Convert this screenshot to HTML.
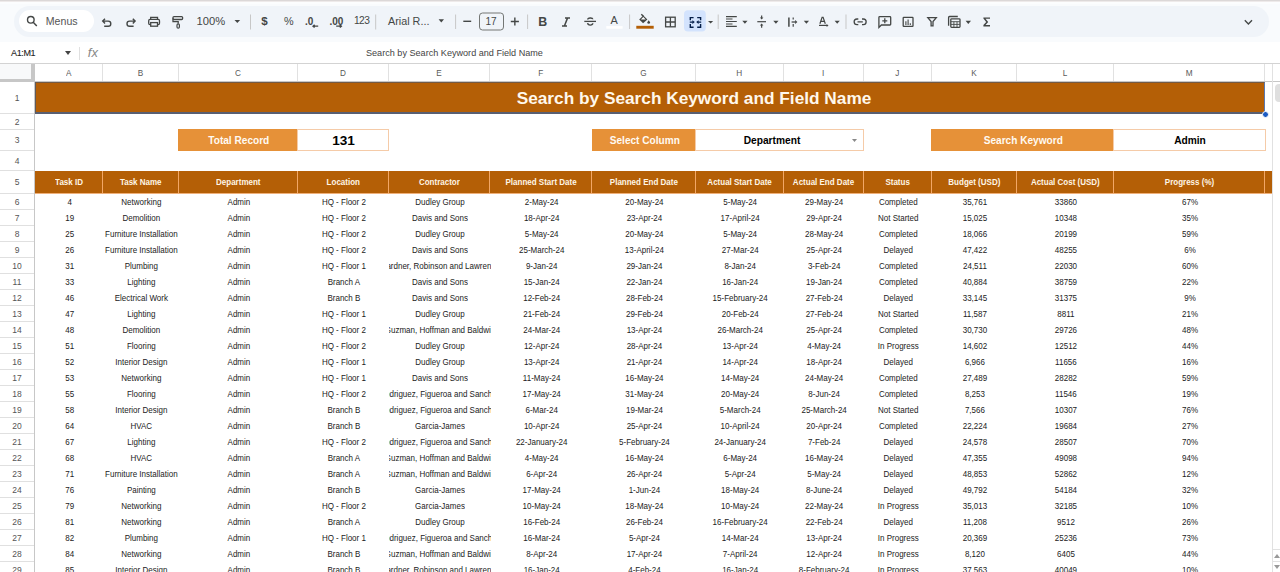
<!DOCTYPE html><html><head><meta charset="utf-8"><style>
*{margin:0;padding:0;box-sizing:border-box}
html,body{width:1280px;height:572px;overflow:hidden;background:#fff;font-family:"Liberation Sans",sans-serif;position:relative}
.a{position:absolute}
.c{position:absolute;overflow:hidden;white-space:nowrap;text-align:center;display:flex;justify-content:center}
.c span{display:inline-block}
.d{font-size:8px;color:#222;line-height:16px;padding-top:1.9px}
.d span,.h5 span{transform:scaleY(1.1)}
.ch{font-size:8.2px;color:#5a5a5a;line-height:18px;text-align:center}
.ch span{transform:scaleY(1.12)}
.rh{font-size:8.5px;color:#555;text-align:center;left:0;width:34px}
.hl{position:absolute;left:0;width:34px;height:1px;background:#e0e0e0}
.ico{position:absolute}
</style></head><body>

<div class="a" style="left:0;top:0;width:1280px;height:1px;background:#dcd8d8"></div><div class="a" style="left:0;top:1px;width:1280px;height:1px;background:#eeeaea"></div>
<div class="a" style="left:0;top:2px;width:1280px;height:40px;background:#f9fbfd"></div><div class="a" style="left:0;top:2px;width:1280px;height:2px;background:#fcfdfe"></div>
<div class="a" style="left:14px;top:6px;width:1255px;height:31px;background:#f0f4f9;border-radius:16px"></div>
<div class="a" style="left:19px;top:10px;width:75px;height:22px;background:#fff;border-radius:11px"></div>
<div class="a" style="left:45.8px;top:15px;font-size:10.6px;color:#555;line-height:12px">Menus</div>
<svg class="ico" style="left:0;top:0" width="1280" height="42" viewBox="0 0 1280 42">
<g fill="none" stroke="#444746" stroke-width="1.3" stroke-linecap="butt" stroke-linejoin="miter">
<!-- search -->
<circle cx="30.8" cy="19.8" r="3.3" stroke-width="1.4"/>
<path d="M33.2 22.3L36.8 26" stroke-width="1.5"/>
<!-- undo -->
<path d="M105 18.8L102.7 21.1L105 23.4M102.8 21.1H108.2A2.6 2.6 0 0 1 108.2 26.3H104.2" stroke-width="1.4"/>
<!-- redo -->
<path d="M132.8 18.8L135.1 21.1L132.8 23.4M135 21.1H129.6A2.6 2.6 0 0 0 129.6 26.3H133.6" stroke-width="1.4"/>
<!-- print -->
<path d="M150.7 19.3V17.4H157.5V19.3" stroke-width="1.3"/>
<rect x="148.7" y="19.4" width="10.8" height="5.2" rx="1.3" stroke-width="1.3"/>
<rect x="150.7" y="22.6" width="6.8" height="3.6" stroke-width="1.3" fill="#f0f4f9"/>
<!-- paint format -->
<rect x="173" y="16.6" width="9.6" height="2.9" rx="1" stroke-width="1.3"/>
<path d="M173 18.2V21.6H178.2V23.6" stroke-width="1.3"/>
<rect x="177" y="23.8" width="2.4" height="4.4" rx="1.2" stroke-width="1.2"/>
<!-- separators -->
<path d="M250.5 14.5V29.5M375.7 14.5V29.5M455.6 14.5V29M527.6 14.5V29M629.6 14.5V29M718.2 14.5V29M846 14.5V29" stroke="#c7c7c7" stroke-width="1"/>
<!-- minus plus -->
<path d="M463.3 21.3H471.2" stroke-width="1.4"/>
<path d="M510.8 21.5H518.9M514.85 17.5V25.6" stroke-width="1.4"/>
<!-- font size box -->
<rect x="479.5" y="13" width="24" height="17" rx="3" stroke="#747775" stroke-width="1"/>
<!-- italic -->
<path d="M565 17.9H570M562 26H567M567.6 17.9L564.4 26" stroke-width="1.5"/>
<!-- strikethrough -->
<path d="M584.3 21.4H596" stroke-width="1.3"/>
<path d="M587.7 19.6C587.7 17.6 592.6 17.3 592.8 19.3" stroke-width="1.4"/>
<path d="M587.6 23.2C587.9 25.7 592.7 25.7 592.8 23.3" stroke-width="1.4"/>
<!-- borders -->
<rect x="665.6" y="17.2" width="9.6" height="9.6" stroke-width="1.3"/>
<path d="M670.4 17.2V26.8M665.6 22H675.2" stroke-width="1.3"/>
<!-- align left -->
<path d="M726 16.6H736.8M726 19H732.5M726 21.5H736.8M726 24H732.5M726 26.4H736.8" stroke-width="1.15"/>
<!-- vertical align -->
<path d="M757.3 21.7H766" stroke-width="1.2"/>
<path d="M761.65 15.6V18.2M761.65 27.7V25" stroke-width="1.2"/>
<path d="M759.9 17.6H763.4L761.65 19.6Z M759.9 25.6H763.4L761.65 23.5Z" fill="#444746" stroke="none"/>
<!-- text wrap -->
<path d="M788.9 17.6V26.7" stroke-width="1.5"/>
<path d="M793.2 17.6V19.6M793.2 23.9V26.7" stroke-width="1.2"/>
<path d="M791.6 22H795.4" stroke-width="1.3"/>
<path d="M795.1 20.1L797.4 22L795.1 23.9Z" fill="#444746" stroke="none"/>
<!-- text rotate -->
<path d="M819.9 23.7L822.1 17.3H823.1L825.3 23.7M820.7 21.4H824.5" stroke-width="1.2"/>
<path d="M819 25.4H827" stroke-width="1.2"/>
<path d="M826.6 23.9L828.5 25.4L826.6 26.9Z" fill="#444746" stroke="none"/>
<!-- link -->
<path d="M858.3 19H857A2.85 2.85 0 0 0 857 24.7H858.3M862 19H863.3A2.85 2.85 0 0 1 863.3 24.7H862M857.5 21.85H862.8" stroke-width="1.3"/>
<!-- comment -->
<path d="M878.9 27.4V17.4Q878.9 16.6 879.7 16.6H889.9Q890.7 16.6 890.7 17.4V24.2Q890.7 25 889.9 25H881.4Z" stroke-width="1.3"/>
<path d="M884.8 18.3V23.3M882.3 20.8H887.3" stroke-width="1.3"/>
<!-- chart -->
<rect x="903.2" y="17.4" width="9.8" height="9" rx="0.6" stroke-width="1.3"/>
<path d="M905.9 25V21.2M908.1 25V19.4M910.3 25V23.2" stroke-width="1.1"/>
<!-- filter -->
<path d="M927.8 17.6H936.3L933 21.6V25.8H931.1V21.6Z" stroke-width="1.3"/>
<!-- calc -->
<path d="M948.6 25.8V17.4Q948.6 16.5 949.5 16.5H957.8" stroke-width="1.3"/>
<rect x="950.8" y="18.8" width="9.2" height="8.6" rx="0.8" stroke-width="1.3"/>
<path d="M951 21.7H959.8M953.9 21.7V27.2M957 21.7V27.2M951 24.4H959.8" stroke-width="0.9"/>
<!-- chevron -->
<path d="M1244.8 20.3L1248.4 23.9L1252 20.3" stroke-width="1.4"/>
</g>
<g fill="#444746">
<!-- dropdown triangles -->
<path d="M234.5 19.9H240.1L237.3 22.9Z"/>
<path d="M438.6 19.3H444L441.3 22.5Z"/>
<path d="M708 20.9H713.2L710.6 23.6Z"/>
<path d="M742.3 20.8H747.5L744.9 23.7Z"/>
<path d="M773.3 20.8H778.5L775.9 23.7Z"/>
<path d="M803.8 20.8H809L806.4 23.7Z"/>
<path d="M834.6 20.8H839.8L837.2 23.7Z"/>
<path d="M965.6 20.8H971L968.3 24Z"/>
<!-- fill bucket -->
<path d="M639.2 19.5L643.3 15.6L647.4 19.5L643.1 23.2Z"/>
<path d="M648.7 20.2C650.2 22.2 650.3 22.6 650.1 23.1C649.8 24 647.6 24 647.3 23.1C647.1 22.6 647.2 22.2 648.7 20.2Z"/>
<!-- sigma -->
<path d="M983.4 17.4H990V18.8H985.5L988.2 21.9L985.5 25H990V26.4H983.4V25.1L986.2 21.9L983.4 18.6Z"/>
</g>
<!-- fill bucket inner -->
<path d="M640.9 19.4L643.3 17.1L645.7 19.4Z" fill="#fff"/>
<path d="M641.3 14.2L643.6 16.6" stroke="#444746" stroke-width="1.4"/>
<rect x="636.3" y="25.8" width="17.4" height="2.9" fill="#b45f06"/>
<rect x="606.3" y="26.1" width="16.3" height="2.6" fill="#fff"/>
<!-- merge bg -->
<rect x="684" y="10.3" width="21.8" height="21.1" rx="4" fill="#d3e3fd"/>
<g fill="none" stroke="#041e49" stroke-width="1.4">
<path d="M693.6 17.6H690.3V20.2M690.3 23.9V27.2H693.6M697.2 17.6H700.6V20.2M700.6 23.9V27.2H697.2"/>
<path d="M689.8 22.1H692.8M701.2 22.1H698.2" stroke-width="1.3"/>
</g>
<g fill="#041e49"><path d="M692.4 20.2L694.8 22.1L692.4 24Z"/><path d="M698.6 20.2L696.2 22.1L698.6 24Z"/></g>
</svg>
<div class="a" style="left:196.5px;top:15.2px;font-size:11.2px;color:#444746;line-height:12px">100%</div>
<div class="a" style="left:261.3px;top:14.6px;font-size:11.6px;font-weight:bold;color:#444746;line-height:12px">$</div>
<div class="a" style="left:284px;top:14.6px;font-size:10.8px;color:#444746;line-height:12px">%</div>
<div class="a" style="left:305px;top:16px;font-size:10px;font-weight:bold;color:#444746;line-height:11px">.0</div>
<div class="a" style="left:329.5px;top:16px;font-size:10px;font-weight:bold;color:#444746;line-height:11px">.00</div>
<svg class="ico" style="left:0;top:0" width="400" height="42"><g fill="none" stroke="#444746" stroke-width="1.3"><path d="M318.2 26.2H313M314.6 24.8L313 26.2L314.6 27.6M336.2 26.2H341.4M339.8 24.8L341.4 26.2L339.8 27.6"/></g></svg>
<div class="a" style="left:354px;top:14.8px;font-size:10.2px;letter-spacing:-0.6px;color:#444746;line-height:12px">123</div>
<div class="a" style="left:388px;top:15.2px;font-size:10.8px;color:#444746;line-height:12px">Arial R...</div>
<div class="a" style="left:485.5px;top:15.5px;font-size:10px;color:#444746;line-height:11px">17</div>
<div class="a" style="left:538.3px;top:16px;font-size:12.4px;font-weight:bold;color:#444746;line-height:12px">B</div>
<div class="a" style="left:610.6px;top:15.2px;font-size:10.9px;color:#444746;line-height:11px">A</div>

<div class="a" style="left:0;top:42px;width:1280px;height:21px;background:#fff"></div>
<div class="a" style="left:11px;top:48.2px;font-size:9px;letter-spacing:-0.35px;-webkit-text-stroke:0.1px #222;color:#222;line-height:11px">A1:M1</div>
<svg class="ico" style="left:65px;top:51px" width="6" height="4"><path d="M0 0h6L3 4z" fill="#444"/></svg>
<div class="a" style="left:79px;top:47px;width:1px;height:13px;background:#e0e0e0"></div>
<div class="a" style="left:87.8px;top:46.4px;font-size:13px;color:#888;font-style:italic;line-height:14px">fx</div>
<div class="a" style="left:366px;top:46.6px;font-size:9.1px;color:#444;line-height:12px">Search by Search Keyword and Field Name</div>
<div class="a" style="left:0;top:63px;width:1280px;height:1px;background:#d3d3d3"></div>
<div class="a" style="left:0;top:64px;width:32px;height:16px;background:#f8f9fa"></div>
<div class="c ch" style="left:35px;top:64.7px;width:67.5px;height:18px"><span>A</span></div>
<div class="a" style="left:102px;top:64px;width:1px;height:18px;background:#e1e1e1"></div>
<div class="c ch" style="left:102.5px;top:64.7px;width:75.9px;height:18px"><span>B</span></div>
<div class="a" style="left:178px;top:64px;width:1px;height:18px;background:#e1e1e1"></div>
<div class="c ch" style="left:178.4px;top:64.7px;width:119.20000000000002px;height:18px"><span>C</span></div>
<div class="a" style="left:297px;top:64px;width:1px;height:18px;background:#e1e1e1"></div>
<div class="c ch" style="left:297.6px;top:64.7px;width:90.79999999999995px;height:18px"><span>D</span></div>
<div class="a" style="left:388px;top:64px;width:1px;height:18px;background:#e1e1e1"></div>
<div class="c ch" style="left:388.4px;top:64.7px;width:101.40000000000003px;height:18px"><span>E</span></div>
<div class="a" style="left:489px;top:64px;width:1px;height:18px;background:#e1e1e1"></div>
<div class="c ch" style="left:489.8px;top:64.7px;width:101.99999999999994px;height:18px"><span>F</span></div>
<div class="a" style="left:591px;top:64px;width:1px;height:18px;background:#e1e1e1"></div>
<div class="c ch" style="left:591.8px;top:64.7px;width:103.5px;height:18px"><span>G</span></div>
<div class="a" style="left:695px;top:64px;width:1px;height:18px;background:#e1e1e1"></div>
<div class="c ch" style="left:695.3px;top:64.7px;width:88.0px;height:18px"><span>H</span></div>
<div class="a" style="left:783px;top:64px;width:1px;height:18px;background:#e1e1e1"></div>
<div class="c ch" style="left:783.3px;top:64.7px;width:79.90000000000009px;height:18px"><span>I</span></div>
<div class="a" style="left:863px;top:64px;width:1px;height:18px;background:#e1e1e1"></div>
<div class="c ch" style="left:863.2px;top:64.7px;width:68.29999999999995px;height:18px"><span>J</span></div>
<div class="a" style="left:931px;top:64px;width:1px;height:18px;background:#e1e1e1"></div>
<div class="c ch" style="left:931.5px;top:64.7px;width:85.10000000000002px;height:18px"><span>K</span></div>
<div class="a" style="left:1016px;top:64px;width:1px;height:18px;background:#e1e1e1"></div>
<div class="c ch" style="left:1016.6px;top:64.7px;width:96.89999999999998px;height:18px"><span>L</span></div>
<div class="a" style="left:1113px;top:64px;width:1px;height:18px;background:#e1e1e1"></div>
<div class="c ch" style="left:1113.5px;top:64.7px;width:151.4000000000001px;height:18px"><span>M</span></div>
<div class="a" style="left:1264px;top:64px;width:1px;height:18px;background:#e1e1e1"></div>
<div class="c ch" style="left:1264.9px;top:64.7px;width:7.099999999999909px;height:18px"><span></span></div>
<div class="a" style="left:1272px;top:64px;width:1px;height:18px;background:#e1e1e1"></div>
<div class="a" style="left:0;top:81px;width:1280px;height:1px;background:#c7c7c7"></div>
<div class="a" style="left:0;top:79px;width:35px;height:3px;background:#c7c7c7"></div>
<div class="a" style="left:31px;top:64px;width:4px;height:18px;background:#c7c7c7"></div>
<div class="a" style="left:34px;top:82px;width:1px;height:490px;background:#c7c7c7"></div>
<div class="c rh" style="top:82.7px;height:31px;line-height:31px">1</div>
<div class="hl" style="top:113px"></div>
<div class="c rh" style="top:113.7px;height:16px;line-height:16px">2</div>
<div class="hl" style="top:129px"></div>
<div class="c rh" style="top:129.7px;height:21px;line-height:21px">3</div>
<div class="hl" style="top:150px"></div>
<div class="c rh" style="top:150.7px;height:20px;line-height:20px">4</div>
<div class="hl" style="top:170px"></div>
<div class="c rh" style="top:170.7px;height:23px;line-height:23px">5</div>
<div class="hl" style="top:193px"></div>
<div class="c rh" style="top:193.7px;height:16px;line-height:16px">6</div>
<div class="hl" style="top:209px"></div>
<div class="c rh" style="top:209.7px;height:16px;line-height:16px">7</div>
<div class="hl" style="top:225px"></div>
<div class="c rh" style="top:225.7px;height:16px;line-height:16px">8</div>
<div class="hl" style="top:241px"></div>
<div class="c rh" style="top:241.7px;height:16px;line-height:16px">9</div>
<div class="hl" style="top:257px"></div>
<div class="c rh" style="top:257.7px;height:16px;line-height:16px">10</div>
<div class="hl" style="top:273px"></div>
<div class="c rh" style="top:273.7px;height:16px;line-height:16px">11</div>
<div class="hl" style="top:289px"></div>
<div class="c rh" style="top:289.7px;height:16px;line-height:16px">12</div>
<div class="hl" style="top:305px"></div>
<div class="c rh" style="top:305.7px;height:16px;line-height:16px">13</div>
<div class="hl" style="top:321px"></div>
<div class="c rh" style="top:321.7px;height:16px;line-height:16px">14</div>
<div class="hl" style="top:337px"></div>
<div class="c rh" style="top:337.7px;height:16px;line-height:16px">15</div>
<div class="hl" style="top:353px"></div>
<div class="c rh" style="top:353.7px;height:16px;line-height:16px">16</div>
<div class="hl" style="top:369px"></div>
<div class="c rh" style="top:369.7px;height:16px;line-height:16px">17</div>
<div class="hl" style="top:385px"></div>
<div class="c rh" style="top:385.7px;height:16px;line-height:16px">18</div>
<div class="hl" style="top:401px"></div>
<div class="c rh" style="top:401.7px;height:16px;line-height:16px">19</div>
<div class="hl" style="top:417px"></div>
<div class="c rh" style="top:417.7px;height:16px;line-height:16px">20</div>
<div class="hl" style="top:433px"></div>
<div class="c rh" style="top:433.7px;height:16px;line-height:16px">21</div>
<div class="hl" style="top:449px"></div>
<div class="c rh" style="top:449.7px;height:16px;line-height:16px">22</div>
<div class="hl" style="top:465px"></div>
<div class="c rh" style="top:465.7px;height:16px;line-height:16px">23</div>
<div class="hl" style="top:481px"></div>
<div class="c rh" style="top:481.7px;height:16px;line-height:16px">24</div>
<div class="hl" style="top:497px"></div>
<div class="c rh" style="top:497.7px;height:16px;line-height:16px">25</div>
<div class="hl" style="top:513px"></div>
<div class="c rh" style="top:513.7px;height:16px;line-height:16px">26</div>
<div class="hl" style="top:529px"></div>
<div class="c rh" style="top:529.7px;height:16px;line-height:16px">27</div>
<div class="hl" style="top:545px"></div>
<div class="c rh" style="top:545.7px;height:16px;line-height:16px">28</div>
<div class="hl" style="top:561px"></div>
<div class="c rh" style="top:561.7px;height:16px;line-height:16px">29</div>
<div class="hl" style="top:577px"></div>
<div class="a" style="left:35px;top:82px;width:1230px;height:32px;background:#b45f06;border:1px solid #5f5a5a;border-top-color:#735a45;border-right-color:#5a78b0;border-bottom:2px solid #585f72"></div>
<div class="c" style="left:79px;top:82.5px;width:1230px;height:31px;line-height:31px;font-size:17.25px;font-weight:bold;color:#fff8ec">Search by Search Keyword and Field Name</div>
<div class="a" style="left:1262px;top:111px;width:7px;height:7px;border-radius:50%;background:#1a5bc4;border:1px solid #fff"></div>
<div class="a" style="left:178px;top:129.3px;width:119px;height:21.6px;background:#e69138"></div>
<div class="c" style="left:179.3px;top:131px;width:119px;height:20px;line-height:20px;color:#fffaf2;font-weight:bold;font-size:10.1px">Total Record</div>
<div class="a" style="left:297px;top:129.3px;width:91.5px;height:21.6px;background:#fff;border:1px solid #f5cba8"></div>
<div class="c" style="left:298px;top:130.6px;width:91px;height:20px;line-height:20px;color:#000;font-weight:bold;font-size:13.6px">131</div>
<div class="a" style="left:592px;top:129.3px;width:103px;height:21.6px;background:#e69138"></div>
<div class="c" style="left:593.3px;top:131px;width:103px;height:20px;line-height:20px;color:#fffaf2;font-weight:bold;font-size:10.1px">Select Column</div>
<div class="a" style="left:695px;top:129.3px;width:168.5px;height:21.6px;background:#fff;border:1px solid #f5cba8"></div>
<div class="c" style="left:688px;top:131px;width:168px;height:20px;line-height:20px;color:#000;font-weight:bold;font-size:10.2px">Department</div>
<svg class="ico" style="left:852px;top:139px" width="5" height="3"><path d="M0 0h5L2.5 3z" fill="#888"/></svg>
<div class="a" style="left:931px;top:129.3px;width:182px;height:21.6px;background:#e69138"></div>
<div class="c" style="left:932.3px;top:131px;width:182px;height:20px;line-height:20px;color:#fffaf2;font-weight:bold;font-size:10.1px">Search Keyword</div>
<div class="a" style="left:1113px;top:129.3px;width:152.5px;height:21.6px;background:#fff;border:1px solid #f5cba8"></div>
<div class="c" style="left:1114px;top:131px;width:152px;height:20px;line-height:20px;color:#000;font-weight:bold;font-size:10.2px">Admin</div>
<div class="a" style="left:35px;top:170.6px;width:1237px;height:22.4px;background:#b45f06"></div>
<div class="c h5" style="left:35.3px;top:170.8px;width:67.5px;height:23px;line-height:23px;font-size:8px;font-weight:bold;color:#fff6e6"><span>Task ID</span></div>
<div class="a" style="left:102px;top:170.6px;width:1px;height:22.4px;background:#f2a766"></div>
<div class="c h5" style="left:102.8px;top:170.8px;width:75.9px;height:23px;line-height:23px;font-size:8px;font-weight:bold;color:#fff6e6"><span>Task Name</span></div>
<div class="a" style="left:178px;top:170.6px;width:1px;height:22.4px;background:#f2a766"></div>
<div class="c h5" style="left:178.70000000000002px;top:170.8px;width:119.20000000000002px;height:23px;line-height:23px;font-size:8px;font-weight:bold;color:#fff6e6"><span>Department</span></div>
<div class="a" style="left:297px;top:170.6px;width:1px;height:22.4px;background:#f2a766"></div>
<div class="c h5" style="left:297.90000000000003px;top:170.8px;width:90.79999999999995px;height:23px;line-height:23px;font-size:8px;font-weight:bold;color:#fff6e6"><span>Location</span></div>
<div class="a" style="left:388px;top:170.6px;width:1px;height:22.4px;background:#f2a766"></div>
<div class="c h5" style="left:388.7px;top:170.8px;width:101.40000000000003px;height:23px;line-height:23px;font-size:8px;font-weight:bold;color:#fff6e6"><span>Contractor</span></div>
<div class="a" style="left:489px;top:170.6px;width:1px;height:22.4px;background:#f2a766"></div>
<div class="c h5" style="left:490.1px;top:170.8px;width:101.99999999999994px;height:23px;line-height:23px;font-size:8px;font-weight:bold;color:#fff6e6"><span>Planned Start Date</span></div>
<div class="a" style="left:591px;top:170.6px;width:1px;height:22.4px;background:#f2a766"></div>
<div class="c h5" style="left:592.0999999999999px;top:170.8px;width:103.5px;height:23px;line-height:23px;font-size:8px;font-weight:bold;color:#fff6e6"><span>Planned End Date</span></div>
<div class="a" style="left:695px;top:170.6px;width:1px;height:22.4px;background:#f2a766"></div>
<div class="c h5" style="left:695.5999999999999px;top:170.8px;width:88.0px;height:23px;line-height:23px;font-size:8px;font-weight:bold;color:#fff6e6"><span>Actual Start Date</span></div>
<div class="a" style="left:783px;top:170.6px;width:1px;height:22.4px;background:#f2a766"></div>
<div class="c h5" style="left:783.5999999999999px;top:170.8px;width:79.90000000000009px;height:23px;line-height:23px;font-size:8px;font-weight:bold;color:#fff6e6"><span>Actual End Date</span></div>
<div class="a" style="left:863px;top:170.6px;width:1px;height:22.4px;background:#f2a766"></div>
<div class="c h5" style="left:863.5px;top:170.8px;width:68.29999999999995px;height:23px;line-height:23px;font-size:8px;font-weight:bold;color:#fff6e6"><span>Status</span></div>
<div class="a" style="left:931px;top:170.6px;width:1px;height:22.4px;background:#f2a766"></div>
<div class="c h5" style="left:931.8px;top:170.8px;width:85.10000000000002px;height:23px;line-height:23px;font-size:8px;font-weight:bold;color:#fff6e6"><span>Budget (USD)</span></div>
<div class="a" style="left:1016px;top:170.6px;width:1px;height:22.4px;background:#f2a766"></div>
<div class="c h5" style="left:1016.9px;top:170.8px;width:96.89999999999998px;height:23px;line-height:23px;font-size:8px;font-weight:bold;color:#fff6e6"><span>Actual Cost (USD)</span></div>
<div class="a" style="left:1113px;top:170.6px;width:1px;height:22.4px;background:#f2a766"></div>
<div class="c h5" style="left:1113.8px;top:170.8px;width:151.4000000000001px;height:23px;line-height:23px;font-size:8px;font-weight:bold;color:#fff6e6"><span>Progress (%)</span></div>
<div class="a" style="left:1264px;top:170.6px;width:1px;height:22.4px;background:#f2a766"></div>
<div class="a" style="left:35px;top:192.6px;width:1237px;height:1px;background:#efb07a"></div>
<div class="c d" style="left:35.9px;top:193px;width:67.5px;height:16px"><span>4</span></div>
<div class="c d" style="left:103.4px;top:193px;width:75.9px;height:16px"><span>Networking</span></div>
<div class="c d" style="left:179.3px;top:193px;width:119.20000000000002px;height:16px"><span>Admin</span></div>
<div class="c d" style="left:298.5px;top:193px;width:90.79999999999995px;height:16px"><span>HQ - Floor 2</span></div>
<div class="c d" style="left:389.29999999999995px;top:193px;width:101.40000000000003px;height:16px"><span>Dudley Group</span></div>
<div class="c d" style="left:490.7px;top:193px;width:101.99999999999994px;height:16px"><span>2-May-24</span></div>
<div class="c d" style="left:592.6999999999999px;top:193px;width:103.5px;height:16px"><span>20-May-24</span></div>
<div class="c d" style="left:696.1999999999999px;top:193px;width:88.0px;height:16px"><span>5-May-24</span></div>
<div class="c d" style="left:784.1999999999999px;top:193px;width:79.90000000000009px;height:16px"><span>29-May-24</span></div>
<div class="c d" style="left:864.1px;top:193px;width:68.29999999999995px;height:16px"><span>Completed</span></div>
<div class="c d" style="left:932.4px;top:193px;width:85.10000000000002px;height:16px"><span>35,761</span></div>
<div class="c d" style="left:1017.5px;top:193px;width:96.89999999999998px;height:16px"><span>33860</span></div>
<div class="c d" style="left:1114.4px;top:193px;width:151.4000000000001px;height:16px"><span>67%</span></div>
<div class="c d" style="left:35.9px;top:209px;width:67.5px;height:16px"><span>19</span></div>
<div class="c d" style="left:103.4px;top:209px;width:75.9px;height:16px"><span>Demolition</span></div>
<div class="c d" style="left:179.3px;top:209px;width:119.20000000000002px;height:16px"><span>Admin</span></div>
<div class="c d" style="left:298.5px;top:209px;width:90.79999999999995px;height:16px"><span>HQ - Floor 2</span></div>
<div class="c d" style="left:389.29999999999995px;top:209px;width:101.40000000000003px;height:16px"><span>Davis and Sons</span></div>
<div class="c d" style="left:490.7px;top:209px;width:101.99999999999994px;height:16px"><span>18-Apr-24</span></div>
<div class="c d" style="left:592.6999999999999px;top:209px;width:103.5px;height:16px"><span>23-Apr-24</span></div>
<div class="c d" style="left:696.1999999999999px;top:209px;width:88.0px;height:16px"><span>17-April-24</span></div>
<div class="c d" style="left:784.1999999999999px;top:209px;width:79.90000000000009px;height:16px"><span>29-Apr-24</span></div>
<div class="c d" style="left:864.1px;top:209px;width:68.29999999999995px;height:16px"><span>Not Started</span></div>
<div class="c d" style="left:932.4px;top:209px;width:85.10000000000002px;height:16px"><span>15,025</span></div>
<div class="c d" style="left:1017.5px;top:209px;width:96.89999999999998px;height:16px"><span>10348</span></div>
<div class="c d" style="left:1114.4px;top:209px;width:151.4000000000001px;height:16px"><span>35%</span></div>
<div class="c d" style="left:35.9px;top:225px;width:67.5px;height:16px"><span>25</span></div>
<div class="c d" style="left:103.4px;top:225px;width:75.9px;height:16px"><span>Furniture Installation</span></div>
<div class="c d" style="left:179.3px;top:225px;width:119.20000000000002px;height:16px"><span>Admin</span></div>
<div class="c d" style="left:298.5px;top:225px;width:90.79999999999995px;height:16px"><span>HQ - Floor 2</span></div>
<div class="c d" style="left:389.29999999999995px;top:225px;width:101.40000000000003px;height:16px"><span>Dudley Group</span></div>
<div class="c d" style="left:490.7px;top:225px;width:101.99999999999994px;height:16px"><span>5-May-24</span></div>
<div class="c d" style="left:592.6999999999999px;top:225px;width:103.5px;height:16px"><span>20-May-24</span></div>
<div class="c d" style="left:696.1999999999999px;top:225px;width:88.0px;height:16px"><span>5-May-24</span></div>
<div class="c d" style="left:784.1999999999999px;top:225px;width:79.90000000000009px;height:16px"><span>28-May-24</span></div>
<div class="c d" style="left:864.1px;top:225px;width:68.29999999999995px;height:16px"><span>Completed</span></div>
<div class="c d" style="left:932.4px;top:225px;width:85.10000000000002px;height:16px"><span>18,066</span></div>
<div class="c d" style="left:1017.5px;top:225px;width:96.89999999999998px;height:16px"><span>20199</span></div>
<div class="c d" style="left:1114.4px;top:225px;width:151.4000000000001px;height:16px"><span>59%</span></div>
<div class="c d" style="left:35.9px;top:241px;width:67.5px;height:16px"><span>26</span></div>
<div class="c d" style="left:103.4px;top:241px;width:75.9px;height:16px"><span>Furniture Installation</span></div>
<div class="c d" style="left:179.3px;top:241px;width:119.20000000000002px;height:16px"><span>Admin</span></div>
<div class="c d" style="left:298.5px;top:241px;width:90.79999999999995px;height:16px"><span>HQ - Floor 2</span></div>
<div class="c d" style="left:389.29999999999995px;top:241px;width:101.40000000000003px;height:16px"><span>Davis and Sons</span></div>
<div class="c d" style="left:490.7px;top:241px;width:101.99999999999994px;height:16px"><span>25-March-24</span></div>
<div class="c d" style="left:592.6999999999999px;top:241px;width:103.5px;height:16px"><span>13-April-24</span></div>
<div class="c d" style="left:696.1999999999999px;top:241px;width:88.0px;height:16px"><span>27-Mar-24</span></div>
<div class="c d" style="left:784.1999999999999px;top:241px;width:79.90000000000009px;height:16px"><span>25-Apr-24</span></div>
<div class="c d" style="left:864.1px;top:241px;width:68.29999999999995px;height:16px"><span>Delayed</span></div>
<div class="c d" style="left:932.4px;top:241px;width:85.10000000000002px;height:16px"><span>47,422</span></div>
<div class="c d" style="left:1017.5px;top:241px;width:96.89999999999998px;height:16px"><span>48255</span></div>
<div class="c d" style="left:1114.4px;top:241px;width:151.4000000000001px;height:16px"><span>6%</span></div>
<div class="c d" style="left:35.9px;top:257px;width:67.5px;height:16px"><span>31</span></div>
<div class="c d" style="left:103.4px;top:257px;width:75.9px;height:16px"><span>Plumbing</span></div>
<div class="c d" style="left:179.3px;top:257px;width:119.20000000000002px;height:16px"><span>Admin</span></div>
<div class="c d" style="left:298.5px;top:257px;width:90.79999999999995px;height:16px"><span>HQ - Floor 1</span></div>
<div class="c d" style="left:389.29999999999995px;top:257px;width:101.40000000000003px;height:16px"><span>Gardner, Robinson and Lawrence</span></div>
<div class="c d" style="left:490.7px;top:257px;width:101.99999999999994px;height:16px"><span>9-Jan-24</span></div>
<div class="c d" style="left:592.6999999999999px;top:257px;width:103.5px;height:16px"><span>29-Jan-24</span></div>
<div class="c d" style="left:696.1999999999999px;top:257px;width:88.0px;height:16px"><span>8-Jan-24</span></div>
<div class="c d" style="left:784.1999999999999px;top:257px;width:79.90000000000009px;height:16px"><span>3-Feb-24</span></div>
<div class="c d" style="left:864.1px;top:257px;width:68.29999999999995px;height:16px"><span>Completed</span></div>
<div class="c d" style="left:932.4px;top:257px;width:85.10000000000002px;height:16px"><span>24,511</span></div>
<div class="c d" style="left:1017.5px;top:257px;width:96.89999999999998px;height:16px"><span>22030</span></div>
<div class="c d" style="left:1114.4px;top:257px;width:151.4000000000001px;height:16px"><span>60%</span></div>
<div class="c d" style="left:35.9px;top:273px;width:67.5px;height:16px"><span>33</span></div>
<div class="c d" style="left:103.4px;top:273px;width:75.9px;height:16px"><span>Lighting</span></div>
<div class="c d" style="left:179.3px;top:273px;width:119.20000000000002px;height:16px"><span>Admin</span></div>
<div class="c d" style="left:298.5px;top:273px;width:90.79999999999995px;height:16px"><span>Branch A</span></div>
<div class="c d" style="left:389.29999999999995px;top:273px;width:101.40000000000003px;height:16px"><span>Davis and Sons</span></div>
<div class="c d" style="left:490.7px;top:273px;width:101.99999999999994px;height:16px"><span>15-Jan-24</span></div>
<div class="c d" style="left:592.6999999999999px;top:273px;width:103.5px;height:16px"><span>22-Jan-24</span></div>
<div class="c d" style="left:696.1999999999999px;top:273px;width:88.0px;height:16px"><span>16-Jan-24</span></div>
<div class="c d" style="left:784.1999999999999px;top:273px;width:79.90000000000009px;height:16px"><span>19-Jan-24</span></div>
<div class="c d" style="left:864.1px;top:273px;width:68.29999999999995px;height:16px"><span>Completed</span></div>
<div class="c d" style="left:932.4px;top:273px;width:85.10000000000002px;height:16px"><span>40,884</span></div>
<div class="c d" style="left:1017.5px;top:273px;width:96.89999999999998px;height:16px"><span>38759</span></div>
<div class="c d" style="left:1114.4px;top:273px;width:151.4000000000001px;height:16px"><span>22%</span></div>
<div class="c d" style="left:35.9px;top:289px;width:67.5px;height:16px"><span>46</span></div>
<div class="c d" style="left:103.4px;top:289px;width:75.9px;height:16px"><span>Electrical Work</span></div>
<div class="c d" style="left:179.3px;top:289px;width:119.20000000000002px;height:16px"><span>Admin</span></div>
<div class="c d" style="left:298.5px;top:289px;width:90.79999999999995px;height:16px"><span>Branch B</span></div>
<div class="c d" style="left:389.29999999999995px;top:289px;width:101.40000000000003px;height:16px"><span>Davis and Sons</span></div>
<div class="c d" style="left:490.7px;top:289px;width:101.99999999999994px;height:16px"><span>12-Feb-24</span></div>
<div class="c d" style="left:592.6999999999999px;top:289px;width:103.5px;height:16px"><span>28-Feb-24</span></div>
<div class="c d" style="left:696.1999999999999px;top:289px;width:88.0px;height:16px"><span>15-February-24</span></div>
<div class="c d" style="left:784.1999999999999px;top:289px;width:79.90000000000009px;height:16px"><span>27-Feb-24</span></div>
<div class="c d" style="left:864.1px;top:289px;width:68.29999999999995px;height:16px"><span>Delayed</span></div>
<div class="c d" style="left:932.4px;top:289px;width:85.10000000000002px;height:16px"><span>33,145</span></div>
<div class="c d" style="left:1017.5px;top:289px;width:96.89999999999998px;height:16px"><span>31375</span></div>
<div class="c d" style="left:1114.4px;top:289px;width:151.4000000000001px;height:16px"><span>9%</span></div>
<div class="c d" style="left:35.9px;top:305px;width:67.5px;height:16px"><span>47</span></div>
<div class="c d" style="left:103.4px;top:305px;width:75.9px;height:16px"><span>Lighting</span></div>
<div class="c d" style="left:179.3px;top:305px;width:119.20000000000002px;height:16px"><span>Admin</span></div>
<div class="c d" style="left:298.5px;top:305px;width:90.79999999999995px;height:16px"><span>HQ - Floor 1</span></div>
<div class="c d" style="left:389.29999999999995px;top:305px;width:101.40000000000003px;height:16px"><span>Dudley Group</span></div>
<div class="c d" style="left:490.7px;top:305px;width:101.99999999999994px;height:16px"><span>21-Feb-24</span></div>
<div class="c d" style="left:592.6999999999999px;top:305px;width:103.5px;height:16px"><span>29-Feb-24</span></div>
<div class="c d" style="left:696.1999999999999px;top:305px;width:88.0px;height:16px"><span>20-Feb-24</span></div>
<div class="c d" style="left:784.1999999999999px;top:305px;width:79.90000000000009px;height:16px"><span>27-Feb-24</span></div>
<div class="c d" style="left:864.1px;top:305px;width:68.29999999999995px;height:16px"><span>Not Started</span></div>
<div class="c d" style="left:932.4px;top:305px;width:85.10000000000002px;height:16px"><span>11,587</span></div>
<div class="c d" style="left:1017.5px;top:305px;width:96.89999999999998px;height:16px"><span>8811</span></div>
<div class="c d" style="left:1114.4px;top:305px;width:151.4000000000001px;height:16px"><span>21%</span></div>
<div class="c d" style="left:35.9px;top:321px;width:67.5px;height:16px"><span>48</span></div>
<div class="c d" style="left:103.4px;top:321px;width:75.9px;height:16px"><span>Demolition</span></div>
<div class="c d" style="left:179.3px;top:321px;width:119.20000000000002px;height:16px"><span>Admin</span></div>
<div class="c d" style="left:298.5px;top:321px;width:90.79999999999995px;height:16px"><span>HQ - Floor 2</span></div>
<div class="c d" style="left:389.29999999999995px;top:321px;width:101.40000000000003px;height:16px"><span>Guzman, Hoffman and Baldwin</span></div>
<div class="c d" style="left:490.7px;top:321px;width:101.99999999999994px;height:16px"><span>24-Mar-24</span></div>
<div class="c d" style="left:592.6999999999999px;top:321px;width:103.5px;height:16px"><span>13-Apr-24</span></div>
<div class="c d" style="left:696.1999999999999px;top:321px;width:88.0px;height:16px"><span>26-March-24</span></div>
<div class="c d" style="left:784.1999999999999px;top:321px;width:79.90000000000009px;height:16px"><span>25-Apr-24</span></div>
<div class="c d" style="left:864.1px;top:321px;width:68.29999999999995px;height:16px"><span>Completed</span></div>
<div class="c d" style="left:932.4px;top:321px;width:85.10000000000002px;height:16px"><span>30,730</span></div>
<div class="c d" style="left:1017.5px;top:321px;width:96.89999999999998px;height:16px"><span>29726</span></div>
<div class="c d" style="left:1114.4px;top:321px;width:151.4000000000001px;height:16px"><span>48%</span></div>
<div class="c d" style="left:35.9px;top:337px;width:67.5px;height:16px"><span>51</span></div>
<div class="c d" style="left:103.4px;top:337px;width:75.9px;height:16px"><span>Flooring</span></div>
<div class="c d" style="left:179.3px;top:337px;width:119.20000000000002px;height:16px"><span>Admin</span></div>
<div class="c d" style="left:298.5px;top:337px;width:90.79999999999995px;height:16px"><span>HQ - Floor 2</span></div>
<div class="c d" style="left:389.29999999999995px;top:337px;width:101.40000000000003px;height:16px"><span>Dudley Group</span></div>
<div class="c d" style="left:490.7px;top:337px;width:101.99999999999994px;height:16px"><span>12-Apr-24</span></div>
<div class="c d" style="left:592.6999999999999px;top:337px;width:103.5px;height:16px"><span>28-Apr-24</span></div>
<div class="c d" style="left:696.1999999999999px;top:337px;width:88.0px;height:16px"><span>13-Apr-24</span></div>
<div class="c d" style="left:784.1999999999999px;top:337px;width:79.90000000000009px;height:16px"><span>4-May-24</span></div>
<div class="c d" style="left:864.1px;top:337px;width:68.29999999999995px;height:16px"><span>In Progress</span></div>
<div class="c d" style="left:932.4px;top:337px;width:85.10000000000002px;height:16px"><span>14,602</span></div>
<div class="c d" style="left:1017.5px;top:337px;width:96.89999999999998px;height:16px"><span>12512</span></div>
<div class="c d" style="left:1114.4px;top:337px;width:151.4000000000001px;height:16px"><span>44%</span></div>
<div class="c d" style="left:35.9px;top:353px;width:67.5px;height:16px"><span>52</span></div>
<div class="c d" style="left:103.4px;top:353px;width:75.9px;height:16px"><span>Interior Design</span></div>
<div class="c d" style="left:179.3px;top:353px;width:119.20000000000002px;height:16px"><span>Admin</span></div>
<div class="c d" style="left:298.5px;top:353px;width:90.79999999999995px;height:16px"><span>HQ - Floor 1</span></div>
<div class="c d" style="left:389.29999999999995px;top:353px;width:101.40000000000003px;height:16px"><span>Dudley Group</span></div>
<div class="c d" style="left:490.7px;top:353px;width:101.99999999999994px;height:16px"><span>13-Apr-24</span></div>
<div class="c d" style="left:592.6999999999999px;top:353px;width:103.5px;height:16px"><span>21-Apr-24</span></div>
<div class="c d" style="left:696.1999999999999px;top:353px;width:88.0px;height:16px"><span>14-Apr-24</span></div>
<div class="c d" style="left:784.1999999999999px;top:353px;width:79.90000000000009px;height:16px"><span>18-Apr-24</span></div>
<div class="c d" style="left:864.1px;top:353px;width:68.29999999999995px;height:16px"><span>Delayed</span></div>
<div class="c d" style="left:932.4px;top:353px;width:85.10000000000002px;height:16px"><span>6,966</span></div>
<div class="c d" style="left:1017.5px;top:353px;width:96.89999999999998px;height:16px"><span>11656</span></div>
<div class="c d" style="left:1114.4px;top:353px;width:151.4000000000001px;height:16px"><span>16%</span></div>
<div class="c d" style="left:35.9px;top:369px;width:67.5px;height:16px"><span>53</span></div>
<div class="c d" style="left:103.4px;top:369px;width:75.9px;height:16px"><span>Networking</span></div>
<div class="c d" style="left:179.3px;top:369px;width:119.20000000000002px;height:16px"><span>Admin</span></div>
<div class="c d" style="left:298.5px;top:369px;width:90.79999999999995px;height:16px"><span>HQ - Floor 1</span></div>
<div class="c d" style="left:389.29999999999995px;top:369px;width:101.40000000000003px;height:16px"><span>Davis and Sons</span></div>
<div class="c d" style="left:490.7px;top:369px;width:101.99999999999994px;height:16px"><span>11-May-24</span></div>
<div class="c d" style="left:592.6999999999999px;top:369px;width:103.5px;height:16px"><span>16-May-24</span></div>
<div class="c d" style="left:696.1999999999999px;top:369px;width:88.0px;height:16px"><span>14-May-24</span></div>
<div class="c d" style="left:784.1999999999999px;top:369px;width:79.90000000000009px;height:16px"><span>24-May-24</span></div>
<div class="c d" style="left:864.1px;top:369px;width:68.29999999999995px;height:16px"><span>Completed</span></div>
<div class="c d" style="left:932.4px;top:369px;width:85.10000000000002px;height:16px"><span>27,489</span></div>
<div class="c d" style="left:1017.5px;top:369px;width:96.89999999999998px;height:16px"><span>28282</span></div>
<div class="c d" style="left:1114.4px;top:369px;width:151.4000000000001px;height:16px"><span>59%</span></div>
<div class="c d" style="left:35.9px;top:385px;width:67.5px;height:16px"><span>55</span></div>
<div class="c d" style="left:103.4px;top:385px;width:75.9px;height:16px"><span>Flooring</span></div>
<div class="c d" style="left:179.3px;top:385px;width:119.20000000000002px;height:16px"><span>Admin</span></div>
<div class="c d" style="left:298.5px;top:385px;width:90.79999999999995px;height:16px"><span>HQ - Floor 2</span></div>
<div class="c d" style="left:389.29999999999995px;top:385px;width:101.40000000000003px;height:16px"><span>Rodriguez, Figueroa and Sanchez</span></div>
<div class="c d" style="left:490.7px;top:385px;width:101.99999999999994px;height:16px"><span>17-May-24</span></div>
<div class="c d" style="left:592.6999999999999px;top:385px;width:103.5px;height:16px"><span>31-May-24</span></div>
<div class="c d" style="left:696.1999999999999px;top:385px;width:88.0px;height:16px"><span>20-May-24</span></div>
<div class="c d" style="left:784.1999999999999px;top:385px;width:79.90000000000009px;height:16px"><span>8-Jun-24</span></div>
<div class="c d" style="left:864.1px;top:385px;width:68.29999999999995px;height:16px"><span>Completed</span></div>
<div class="c d" style="left:932.4px;top:385px;width:85.10000000000002px;height:16px"><span>8,253</span></div>
<div class="c d" style="left:1017.5px;top:385px;width:96.89999999999998px;height:16px"><span>11546</span></div>
<div class="c d" style="left:1114.4px;top:385px;width:151.4000000000001px;height:16px"><span>19%</span></div>
<div class="c d" style="left:35.9px;top:401px;width:67.5px;height:16px"><span>58</span></div>
<div class="c d" style="left:103.4px;top:401px;width:75.9px;height:16px"><span>Interior Design</span></div>
<div class="c d" style="left:179.3px;top:401px;width:119.20000000000002px;height:16px"><span>Admin</span></div>
<div class="c d" style="left:298.5px;top:401px;width:90.79999999999995px;height:16px"><span>Branch B</span></div>
<div class="c d" style="left:389.29999999999995px;top:401px;width:101.40000000000003px;height:16px"><span>Rodriguez, Figueroa and Sanchez</span></div>
<div class="c d" style="left:490.7px;top:401px;width:101.99999999999994px;height:16px"><span>6-Mar-24</span></div>
<div class="c d" style="left:592.6999999999999px;top:401px;width:103.5px;height:16px"><span>19-Mar-24</span></div>
<div class="c d" style="left:696.1999999999999px;top:401px;width:88.0px;height:16px"><span>5-March-24</span></div>
<div class="c d" style="left:784.1999999999999px;top:401px;width:79.90000000000009px;height:16px"><span>25-March-24</span></div>
<div class="c d" style="left:864.1px;top:401px;width:68.29999999999995px;height:16px"><span>Not Started</span></div>
<div class="c d" style="left:932.4px;top:401px;width:85.10000000000002px;height:16px"><span>7,566</span></div>
<div class="c d" style="left:1017.5px;top:401px;width:96.89999999999998px;height:16px"><span>10307</span></div>
<div class="c d" style="left:1114.4px;top:401px;width:151.4000000000001px;height:16px"><span>76%</span></div>
<div class="c d" style="left:35.9px;top:417px;width:67.5px;height:16px"><span>64</span></div>
<div class="c d" style="left:103.4px;top:417px;width:75.9px;height:16px"><span>HVAC</span></div>
<div class="c d" style="left:179.3px;top:417px;width:119.20000000000002px;height:16px"><span>Admin</span></div>
<div class="c d" style="left:298.5px;top:417px;width:90.79999999999995px;height:16px"><span>Branch B</span></div>
<div class="c d" style="left:389.29999999999995px;top:417px;width:101.40000000000003px;height:16px"><span>Garcia-James</span></div>
<div class="c d" style="left:490.7px;top:417px;width:101.99999999999994px;height:16px"><span>10-Apr-24</span></div>
<div class="c d" style="left:592.6999999999999px;top:417px;width:103.5px;height:16px"><span>25-Apr-24</span></div>
<div class="c d" style="left:696.1999999999999px;top:417px;width:88.0px;height:16px"><span>10-April-24</span></div>
<div class="c d" style="left:784.1999999999999px;top:417px;width:79.90000000000009px;height:16px"><span>20-Apr-24</span></div>
<div class="c d" style="left:864.1px;top:417px;width:68.29999999999995px;height:16px"><span>Completed</span></div>
<div class="c d" style="left:932.4px;top:417px;width:85.10000000000002px;height:16px"><span>22,224</span></div>
<div class="c d" style="left:1017.5px;top:417px;width:96.89999999999998px;height:16px"><span>19684</span></div>
<div class="c d" style="left:1114.4px;top:417px;width:151.4000000000001px;height:16px"><span>27%</span></div>
<div class="c d" style="left:35.9px;top:433px;width:67.5px;height:16px"><span>67</span></div>
<div class="c d" style="left:103.4px;top:433px;width:75.9px;height:16px"><span>Lighting</span></div>
<div class="c d" style="left:179.3px;top:433px;width:119.20000000000002px;height:16px"><span>Admin</span></div>
<div class="c d" style="left:298.5px;top:433px;width:90.79999999999995px;height:16px"><span>HQ - Floor 2</span></div>
<div class="c d" style="left:389.29999999999995px;top:433px;width:101.40000000000003px;height:16px"><span>Rodriguez, Figueroa and Sanchez</span></div>
<div class="c d" style="left:490.7px;top:433px;width:101.99999999999994px;height:16px"><span>22-January-24</span></div>
<div class="c d" style="left:592.6999999999999px;top:433px;width:103.5px;height:16px"><span>5-February-24</span></div>
<div class="c d" style="left:696.1999999999999px;top:433px;width:88.0px;height:16px"><span>24-January-24</span></div>
<div class="c d" style="left:784.1999999999999px;top:433px;width:79.90000000000009px;height:16px"><span>7-Feb-24</span></div>
<div class="c d" style="left:864.1px;top:433px;width:68.29999999999995px;height:16px"><span>Delayed</span></div>
<div class="c d" style="left:932.4px;top:433px;width:85.10000000000002px;height:16px"><span>24,578</span></div>
<div class="c d" style="left:1017.5px;top:433px;width:96.89999999999998px;height:16px"><span>28507</span></div>
<div class="c d" style="left:1114.4px;top:433px;width:151.4000000000001px;height:16px"><span>70%</span></div>
<div class="c d" style="left:35.9px;top:449px;width:67.5px;height:16px"><span>68</span></div>
<div class="c d" style="left:103.4px;top:449px;width:75.9px;height:16px"><span>HVAC</span></div>
<div class="c d" style="left:179.3px;top:449px;width:119.20000000000002px;height:16px"><span>Admin</span></div>
<div class="c d" style="left:298.5px;top:449px;width:90.79999999999995px;height:16px"><span>Branch A</span></div>
<div class="c d" style="left:389.29999999999995px;top:449px;width:101.40000000000003px;height:16px"><span>Guzman, Hoffman and Baldwin</span></div>
<div class="c d" style="left:490.7px;top:449px;width:101.99999999999994px;height:16px"><span>4-May-24</span></div>
<div class="c d" style="left:592.6999999999999px;top:449px;width:103.5px;height:16px"><span>16-May-24</span></div>
<div class="c d" style="left:696.1999999999999px;top:449px;width:88.0px;height:16px"><span>6-May-24</span></div>
<div class="c d" style="left:784.1999999999999px;top:449px;width:79.90000000000009px;height:16px"><span>16-May-24</span></div>
<div class="c d" style="left:864.1px;top:449px;width:68.29999999999995px;height:16px"><span>Delayed</span></div>
<div class="c d" style="left:932.4px;top:449px;width:85.10000000000002px;height:16px"><span>47,355</span></div>
<div class="c d" style="left:1017.5px;top:449px;width:96.89999999999998px;height:16px"><span>49098</span></div>
<div class="c d" style="left:1114.4px;top:449px;width:151.4000000000001px;height:16px"><span>94%</span></div>
<div class="c d" style="left:35.9px;top:465px;width:67.5px;height:16px"><span>71</span></div>
<div class="c d" style="left:103.4px;top:465px;width:75.9px;height:16px"><span>Furniture Installation</span></div>
<div class="c d" style="left:179.3px;top:465px;width:119.20000000000002px;height:16px"><span>Admin</span></div>
<div class="c d" style="left:298.5px;top:465px;width:90.79999999999995px;height:16px"><span>Branch A</span></div>
<div class="c d" style="left:389.29999999999995px;top:465px;width:101.40000000000003px;height:16px"><span>Guzman, Hoffman and Baldwin</span></div>
<div class="c d" style="left:490.7px;top:465px;width:101.99999999999994px;height:16px"><span>6-Apr-24</span></div>
<div class="c d" style="left:592.6999999999999px;top:465px;width:103.5px;height:16px"><span>26-Apr-24</span></div>
<div class="c d" style="left:696.1999999999999px;top:465px;width:88.0px;height:16px"><span>5-Apr-24</span></div>
<div class="c d" style="left:784.1999999999999px;top:465px;width:79.90000000000009px;height:16px"><span>5-May-24</span></div>
<div class="c d" style="left:864.1px;top:465px;width:68.29999999999995px;height:16px"><span>Delayed</span></div>
<div class="c d" style="left:932.4px;top:465px;width:85.10000000000002px;height:16px"><span>48,853</span></div>
<div class="c d" style="left:1017.5px;top:465px;width:96.89999999999998px;height:16px"><span>52862</span></div>
<div class="c d" style="left:1114.4px;top:465px;width:151.4000000000001px;height:16px"><span>12%</span></div>
<div class="c d" style="left:35.9px;top:481px;width:67.5px;height:16px"><span>76</span></div>
<div class="c d" style="left:103.4px;top:481px;width:75.9px;height:16px"><span>Painting</span></div>
<div class="c d" style="left:179.3px;top:481px;width:119.20000000000002px;height:16px"><span>Admin</span></div>
<div class="c d" style="left:298.5px;top:481px;width:90.79999999999995px;height:16px"><span>Branch B</span></div>
<div class="c d" style="left:389.29999999999995px;top:481px;width:101.40000000000003px;height:16px"><span>Garcia-James</span></div>
<div class="c d" style="left:490.7px;top:481px;width:101.99999999999994px;height:16px"><span>17-May-24</span></div>
<div class="c d" style="left:592.6999999999999px;top:481px;width:103.5px;height:16px"><span>1-Jun-24</span></div>
<div class="c d" style="left:696.1999999999999px;top:481px;width:88.0px;height:16px"><span>18-May-24</span></div>
<div class="c d" style="left:784.1999999999999px;top:481px;width:79.90000000000009px;height:16px"><span>8-June-24</span></div>
<div class="c d" style="left:864.1px;top:481px;width:68.29999999999995px;height:16px"><span>Delayed</span></div>
<div class="c d" style="left:932.4px;top:481px;width:85.10000000000002px;height:16px"><span>49,792</span></div>
<div class="c d" style="left:1017.5px;top:481px;width:96.89999999999998px;height:16px"><span>54184</span></div>
<div class="c d" style="left:1114.4px;top:481px;width:151.4000000000001px;height:16px"><span>32%</span></div>
<div class="c d" style="left:35.9px;top:497px;width:67.5px;height:16px"><span>79</span></div>
<div class="c d" style="left:103.4px;top:497px;width:75.9px;height:16px"><span>Networking</span></div>
<div class="c d" style="left:179.3px;top:497px;width:119.20000000000002px;height:16px"><span>Admin</span></div>
<div class="c d" style="left:298.5px;top:497px;width:90.79999999999995px;height:16px"><span>HQ - Floor 2</span></div>
<div class="c d" style="left:389.29999999999995px;top:497px;width:101.40000000000003px;height:16px"><span>Garcia-James</span></div>
<div class="c d" style="left:490.7px;top:497px;width:101.99999999999994px;height:16px"><span>10-May-24</span></div>
<div class="c d" style="left:592.6999999999999px;top:497px;width:103.5px;height:16px"><span>18-May-24</span></div>
<div class="c d" style="left:696.1999999999999px;top:497px;width:88.0px;height:16px"><span>10-May-24</span></div>
<div class="c d" style="left:784.1999999999999px;top:497px;width:79.90000000000009px;height:16px"><span>22-May-24</span></div>
<div class="c d" style="left:864.1px;top:497px;width:68.29999999999995px;height:16px"><span>In Progress</span></div>
<div class="c d" style="left:932.4px;top:497px;width:85.10000000000002px;height:16px"><span>35,013</span></div>
<div class="c d" style="left:1017.5px;top:497px;width:96.89999999999998px;height:16px"><span>32185</span></div>
<div class="c d" style="left:1114.4px;top:497px;width:151.4000000000001px;height:16px"><span>10%</span></div>
<div class="c d" style="left:35.9px;top:513px;width:67.5px;height:16px"><span>81</span></div>
<div class="c d" style="left:103.4px;top:513px;width:75.9px;height:16px"><span>Networking</span></div>
<div class="c d" style="left:179.3px;top:513px;width:119.20000000000002px;height:16px"><span>Admin</span></div>
<div class="c d" style="left:298.5px;top:513px;width:90.79999999999995px;height:16px"><span>Branch A</span></div>
<div class="c d" style="left:389.29999999999995px;top:513px;width:101.40000000000003px;height:16px"><span>Dudley Group</span></div>
<div class="c d" style="left:490.7px;top:513px;width:101.99999999999994px;height:16px"><span>16-Feb-24</span></div>
<div class="c d" style="left:592.6999999999999px;top:513px;width:103.5px;height:16px"><span>26-Feb-24</span></div>
<div class="c d" style="left:696.1999999999999px;top:513px;width:88.0px;height:16px"><span>16-February-24</span></div>
<div class="c d" style="left:784.1999999999999px;top:513px;width:79.90000000000009px;height:16px"><span>22-Feb-24</span></div>
<div class="c d" style="left:864.1px;top:513px;width:68.29999999999995px;height:16px"><span>Delayed</span></div>
<div class="c d" style="left:932.4px;top:513px;width:85.10000000000002px;height:16px"><span>11,208</span></div>
<div class="c d" style="left:1017.5px;top:513px;width:96.89999999999998px;height:16px"><span>9512</span></div>
<div class="c d" style="left:1114.4px;top:513px;width:151.4000000000001px;height:16px"><span>26%</span></div>
<div class="c d" style="left:35.9px;top:529px;width:67.5px;height:16px"><span>82</span></div>
<div class="c d" style="left:103.4px;top:529px;width:75.9px;height:16px"><span>Plumbing</span></div>
<div class="c d" style="left:179.3px;top:529px;width:119.20000000000002px;height:16px"><span>Admin</span></div>
<div class="c d" style="left:298.5px;top:529px;width:90.79999999999995px;height:16px"><span>HQ - Floor 1</span></div>
<div class="c d" style="left:389.29999999999995px;top:529px;width:101.40000000000003px;height:16px"><span>Rodriguez, Figueroa and Sanchez</span></div>
<div class="c d" style="left:490.7px;top:529px;width:101.99999999999994px;height:16px"><span>16-Mar-24</span></div>
<div class="c d" style="left:592.6999999999999px;top:529px;width:103.5px;height:16px"><span>5-Apr-24</span></div>
<div class="c d" style="left:696.1999999999999px;top:529px;width:88.0px;height:16px"><span>14-Mar-24</span></div>
<div class="c d" style="left:784.1999999999999px;top:529px;width:79.90000000000009px;height:16px"><span>13-Apr-24</span></div>
<div class="c d" style="left:864.1px;top:529px;width:68.29999999999995px;height:16px"><span>In Progress</span></div>
<div class="c d" style="left:932.4px;top:529px;width:85.10000000000002px;height:16px"><span>20,369</span></div>
<div class="c d" style="left:1017.5px;top:529px;width:96.89999999999998px;height:16px"><span>25236</span></div>
<div class="c d" style="left:1114.4px;top:529px;width:151.4000000000001px;height:16px"><span>73%</span></div>
<div class="c d" style="left:35.9px;top:545px;width:67.5px;height:16px"><span>84</span></div>
<div class="c d" style="left:103.4px;top:545px;width:75.9px;height:16px"><span>Networking</span></div>
<div class="c d" style="left:179.3px;top:545px;width:119.20000000000002px;height:16px"><span>Admin</span></div>
<div class="c d" style="left:298.5px;top:545px;width:90.79999999999995px;height:16px"><span>Branch B</span></div>
<div class="c d" style="left:389.29999999999995px;top:545px;width:101.40000000000003px;height:16px"><span>Guzman, Hoffman and Baldwin</span></div>
<div class="c d" style="left:490.7px;top:545px;width:101.99999999999994px;height:16px"><span>8-Apr-24</span></div>
<div class="c d" style="left:592.6999999999999px;top:545px;width:103.5px;height:16px"><span>17-Apr-24</span></div>
<div class="c d" style="left:696.1999999999999px;top:545px;width:88.0px;height:16px"><span>7-April-24</span></div>
<div class="c d" style="left:784.1999999999999px;top:545px;width:79.90000000000009px;height:16px"><span>12-Apr-24</span></div>
<div class="c d" style="left:864.1px;top:545px;width:68.29999999999995px;height:16px"><span>In Progress</span></div>
<div class="c d" style="left:932.4px;top:545px;width:85.10000000000002px;height:16px"><span>8,120</span></div>
<div class="c d" style="left:1017.5px;top:545px;width:96.89999999999998px;height:16px"><span>6405</span></div>
<div class="c d" style="left:1114.4px;top:545px;width:151.4000000000001px;height:16px"><span>44%</span></div>
<div class="c d" style="left:35.9px;top:561px;width:67.5px;height:16px"><span>85</span></div>
<div class="c d" style="left:103.4px;top:561px;width:75.9px;height:16px"><span>Interior Design</span></div>
<div class="c d" style="left:179.3px;top:561px;width:119.20000000000002px;height:16px"><span>Admin</span></div>
<div class="c d" style="left:298.5px;top:561px;width:90.79999999999995px;height:16px"><span>Branch B</span></div>
<div class="c d" style="left:389.29999999999995px;top:561px;width:101.40000000000003px;height:16px"><span>Gardner, Robinson and Lawrence</span></div>
<div class="c d" style="left:490.7px;top:561px;width:101.99999999999994px;height:16px"><span>16-Jan-24</span></div>
<div class="c d" style="left:592.6999999999999px;top:561px;width:103.5px;height:16px"><span>4-Feb-24</span></div>
<div class="c d" style="left:696.1999999999999px;top:561px;width:88.0px;height:16px"><span>16-Jan-24</span></div>
<div class="c d" style="left:784.1999999999999px;top:561px;width:79.90000000000009px;height:16px"><span>8-February-24</span></div>
<div class="c d" style="left:864.1px;top:561px;width:68.29999999999995px;height:16px"><span>In Progress</span></div>
<div class="c d" style="left:932.4px;top:561px;width:85.10000000000002px;height:16px"><span>37,563</span></div>
<div class="c d" style="left:1017.5px;top:561px;width:96.89999999999998px;height:16px"><span>40049</span></div>
<div class="c d" style="left:1114.4px;top:561px;width:151.4000000000001px;height:16px"><span>10%</span></div>
<div class="a" style="left:1272px;top:64px;width:1px;height:508px;background:#e1e1e1"></div>
<div class="a" style="left:1273px;top:82px;width:7px;height:490px;background:#fff"></div>
<div class="a" style="left:1275px;top:83.5px;width:8px;height:18.5px;background:#dfdfdf;border-radius:4px"></div>
<div class="a" style="left:1272px;top:549px;width:8px;height:1px;background:#e1e1e1"></div>
<div class="a" style="left:1272px;top:561px;width:8px;height:1px;background:#e1e1e1"></div>
<svg class="ico" style="left:1274px;top:554px" width="6" height="4"><path d="M0 4h6L3 0z" fill="#999"/></svg>
<svg class="ico" style="left:1274px;top:565px" width="6" height="4"><path d="M0 0h6L3 4z" fill="#999"/></svg>
</body></html>
